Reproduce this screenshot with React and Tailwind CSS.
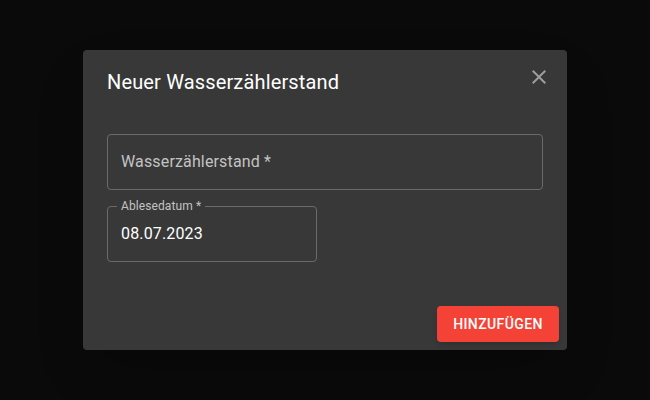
const CloseIcon = () => (
  <svg width="24" height="24" viewBox="0 0 24 24" fill="currentColor">
    <path d="M19 6.41 17.59 5 12 10.59 6.41 5 5 6.41 10.59 12 5 17.59 6.41 19 12 13.41 17.59 19 19 17.59 13.41 12z" />
  </svg>
);

const App = () => {
  return (
    <div
      className="w-[650px] h-[400px] bg-[#0a0a0a] flex items-center justify-center"
      style={{ fontFamily: 'Roboto, "Liberation Sans", sans-serif' }}
    >
      {/* Dialog */}
      <div className="relative w-[484px] h-[300px] bg-[#383838] rounded-[4px] shadow-2xl flex flex-col">
        {/* Title */}
        <div className="px-6 py-4 text-[20px] leading-[32px] font-normal text-white tracking-[0.15px]">
          Neuer Wasserzählerstand
        </div>
        <button className="absolute right-4 top-[15px] p-0 text-[#9d9d9d]">
          <CloseIcon />
        </button>

        {/* Content */}
        <div className="px-6 pt-5 flex flex-col gap-[16px]">
          <div className="h-[56px] w-full border border-[#6a6a6a] rounded-[4px] flex items-center px-[13px]">
            <span className="text-[16px] text-[#c3c3c3] tracking-[0.15px]">Wasserzählerstand *</span>
          </div>

          <div className="relative h-[56px] w-[210px] border border-[#6a6a6a] rounded-[4px] flex items-center px-[13px]">
            <span className="absolute left-[9px] -top-[8px] px-[4px] bg-[#383838] text-[12px] leading-[14px] text-[#c3c3c3] tracking-[0.1px]">
              Ablesedatum *
            </span>
            <span className="text-[16px] text-white tracking-[0.15px]">08.07.2023</span>
          </div>
        </div>

        {/* Actions */}
        <div className="mt-auto p-2 flex justify-end">
          <button className="h-[36px] w-[122px] rounded-[4px] bg-[#f44336] text-white text-[14px] font-medium uppercase tracking-[0.4px] shadow-md">
            Hinzufügen
          </button>
        </div>
      </div>
    </div>
  );
};

export default App;
